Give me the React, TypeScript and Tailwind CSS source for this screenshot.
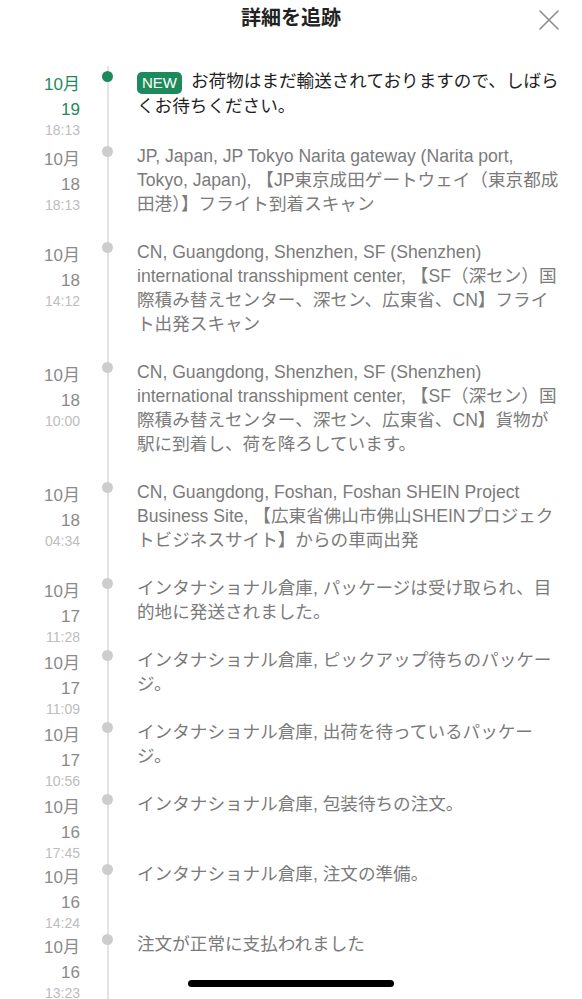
import React from 'react';

type Event = {
  month: string;
  day: string;
  time: string;
  text: string;
};

const events: Event[] = [
  { month: '10月', day: '19', time: '18:13', text: 'お荷物はまだ輸送されておりますので、しばらくお待ちください。' },
  { month: '10月', day: '18', time: '18:13', text: 'JP, Japan, JP Tokyo Narita gateway (Narita port, Tokyo, Japan), 【JP東京成田ゲートウェイ（東京都成田港）】フライト到着スキャン' },
  { month: '10月', day: '18', time: '14:12', text: 'CN, Guangdong, Shenzhen, SF (Shenzhen) international transshipment center, 【SF（深セン）国際積み替えセンター、深セン、広東省、CN】フライ\nト出発スキャン' },
  { month: '10月', day: '18', time: '10:00', text: 'CN, Guangdong, Shenzhen, SF (Shenzhen) international transshipment center, 【SF（深セン）国際積み替えセンター、深セン、広東省、CN】貨物が駅に到着し、荷を降ろしています。' },
  { month: '10月', day: '18', time: '04:34', text: 'CN, Guangdong, Foshan, Foshan SHEIN Project Business Site, 【広東省佛山市佛山SHEINプロジェクトビジネスサイト】からの車両出発' },
  { month: '10月', day: '17', time: '11:28', text: 'インタナショナル倉庫, パッケージは受け取られ、目的地に発送されました。' },
  { month: '10月', day: '17', time: '11:09', text: 'インタナショナル倉庫, ピックアップ待ちのパッケージ。' },
  { month: '10月', day: '17', time: '10:56', text: 'インタナショナル倉庫, 出荷を待っているパッケージ。' },
  { month: '10月', day: '16', time: '17:45', text: 'インタナショナル倉庫, 包装待ちの注文。' },
  { month: '10月', day: '16', time: '14:24', text: 'インタナショナル倉庫, 注文の準備。' },
  { month: '10月', day: '16', time: '13:23', text: '注文が正常に支払われました' },
];

const font = { fontFamily: '"Liberation Sans", "Noto Sans CJK JP", sans-serif' };

const TimelineRow: React.FC<{ ev: Event; latest: boolean }> = ({ ev, latest }) => (
  <div className="flex min-h-[70px]">
    {/* Date column */}
    <div className={`w-[80px] shrink-0 pt-[3px] text-right ${latest ? 'text-[#1d8a5b]' : 'text-[#8a8a8a]'}`}>
      <div className="text-[17px] leading-[25px]">{ev.month}</div>
      <div className="text-[17px] leading-[25px]">{ev.day}</div>
      <div className="text-[14px] leading-[17px] text-[#bdbdbd]">{ev.time}</div>
    </div>

    {/* Dot */}
    <div className="relative flex w-[56px] shrink-0 justify-center pt-[1.5px] pr-[1px]">
      <div className={`h-[11px] w-[11px] rounded-full ${latest ? 'bg-[#1d8a5b]' : 'bg-[#cdcdcd]'}`} />
    </div>

    {/* Description */}
    <div
      className={`flex-1 whitespace-pre-line pr-[21px] pl-[1px] text-[17.6px] leading-[24px] ${
        latest ? 'pb-[26px] text-[#1f1f1f]' : 'pb-[24px] text-[#7b7b7b]'
      }`}
    >
      {latest && (
        <span className="mr-[9px] inline-block h-[22px] rounded-[5px] bg-[#1d8a5b] px-[5px] align-[-1px] text-[15px] leading-[22px] text-white">
          NEW
        </span>
      )}
      {ev.text}
    </div>
  </div>
);

export default function App() {
  return (
    <div className="relative h-[999px] w-full overflow-hidden bg-white" style={font}>
      {/* Header */}
      <div className="grid h-[36px] grid-cols-[1fr_auto_1fr] items-center">
        <div />
        <h1 className="text-[20px] font-bold text-[#222]">詳細を追跡</h1>
        <div className="flex justify-end pr-[22px] pt-[4px]">
          <button className="text-[#8c8c8c]" aria-label="close">
            <svg width="22" height="22" viewBox="0 0 22 22" fill="none" stroke="currentColor" strokeWidth="1.6" strokeLinecap="round">
              <path d="M2 2 L20 20 M20 2 L2 20" />
            </svg>
          </button>
        </div>
      </div>

      {/* Timeline */}
      <div className="relative mt-[30px] pt-[3px]">
        <div className="absolute bottom-0 left-[107px] top-0 w-[1.5px] bg-[#e4e4e4]" />
        <div className="relative flex flex-col">
          {events.map((ev, i) => (
            <TimelineRow key={i} ev={ev} latest={i === 0} />
          ))}
        </div>
      </div>

      {/* Home indicator */}
      <div className="absolute bottom-[12px] left-1/2 h-[7px] w-[206px] -translate-x-1/2 rounded-full bg-black" />
    </div>
  );
}
